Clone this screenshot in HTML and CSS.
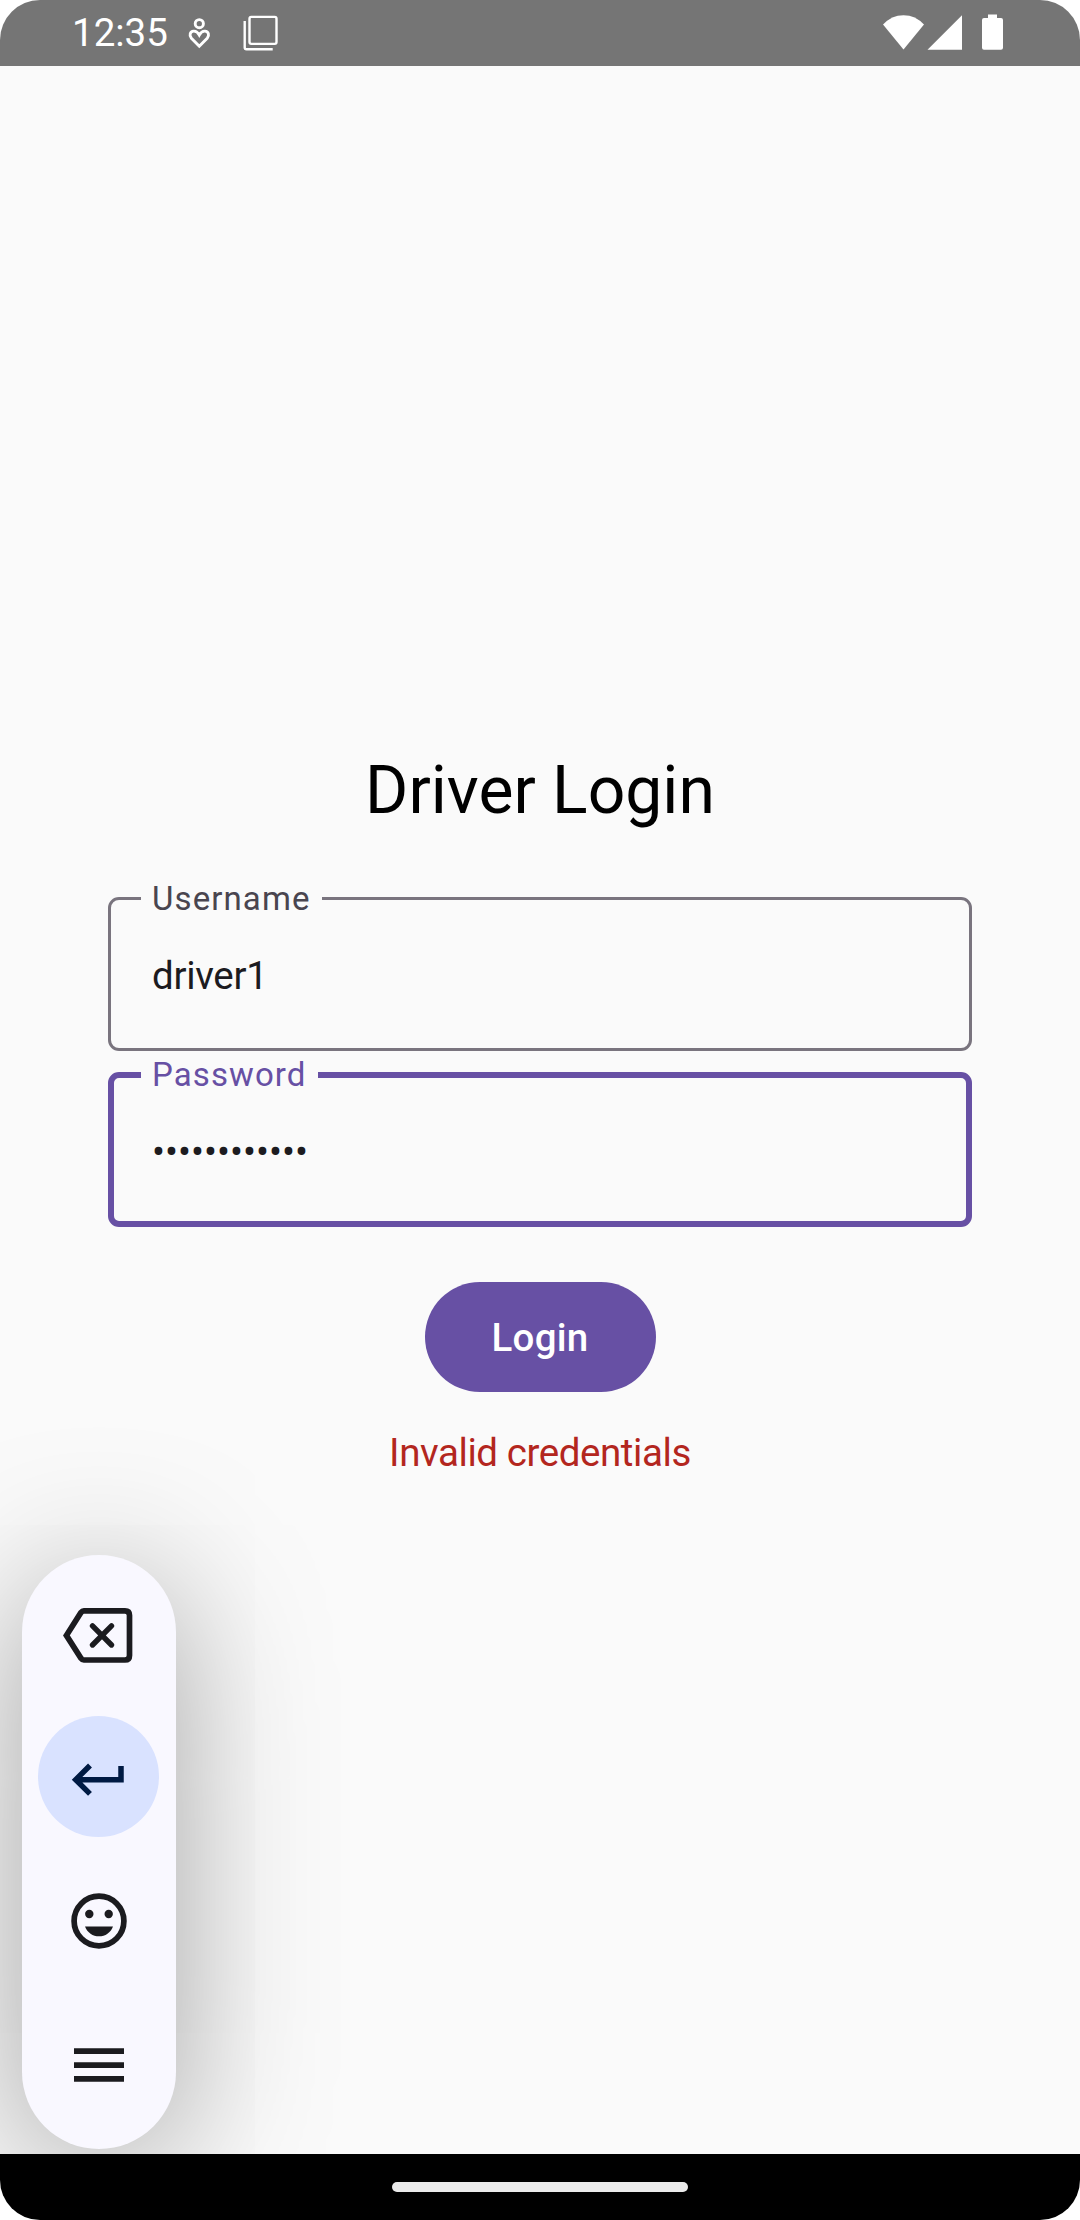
FILE: index.html
```html
<!DOCTYPE html>
<html lang="en">
<head>
<meta charset="utf-8">
<title>Driver Login</title>
<link rel="stylesheet" href="styles.css">
</head>
<body>
<div class="screen">
  <header class="status-bar">
    <span class="clock">12:35</span>
    <svg class="status-notifications" width="100" height="66" viewBox="180 0 100 66" fill="none" stroke="#fff" stroke-width="2.9">
      <circle cx="199.3" cy="23.7" r="4.1"/>
      <path d="M199.3 46.2 L191.4 38.2 C188.8 35.2 190.2 31.4 193.6 31.1 C196.3 30.9 198 32.6 199.3 35 C200.6 32.6 202.3 30.9 205 31.1 C208.4 31.4 209.8 35.2 207.2 38.2 Z"/>
      <rect x="249.5" y="16.9" width="27" height="27" rx="1.8" stroke-width="2.4"/>
      <path d="M244.7 21 V47.5 Q244.7 49.3 246.5 49.3 H272.7" stroke-width="2.4"/>
    </svg>
    <svg class="status-system" width="125" height="66" viewBox="880 0 125 66" fill="#fff">
      <path d="M903.5 49.5 L883 24.6 Q891.500 15.200 903.500 15.200 Q915.500 15.200 924 24.600 Z"/>
      <path d="M927.500 49.700 H962 V15.200 Z"/>
      <path d="M988 14.400 H997 V18 H1001 Q1003 18 1003 20 V47.700 Q1003 49.700 1001 49.700 H984 Q982 49.700 982 47.700 V20 Q982 18 984 18 H988 Z"/>
    </svg>
  </header>

  <main class="content">
    <h1 class="title">Driver Login</h1>
    <form class="login-form">
      <fieldset class="field">
        <legend class="field-label">Username</legend>
        <div class="field-value">driver1</div>
      </fieldset>
      <fieldset class="field field-focused">
        <legend class="field-label">Password</legend>
        <div class="field-value field-dots">••••••••••••</div>
      </fieldset>
      <button class="login-button" type="button">Login</button>
      <p class="error">Invalid credentials</p>
    </form>
    <div class="key-toolbar">
      <div class="key">
        <svg width="121" height="121" viewBox="0 0 121 121" fill="none" stroke="#1b1b1f" stroke-width="5.700">
          <path d="M45.800 37.800 H87 Q91.500 37.800 91.500 42.300 V82.500 Q91.500 87 87 87 H45.800 Q44.300 87 43 85.300 L28.400 62.400 L43 39.500 Q44.300 37.800 45.800 37.800 Z"/>
          <path d="M54.500 52.900 L73.500 72 M73.500 52.900 L54.500 72" stroke-width="5.400" stroke-linecap="round"/>
        </svg>
      </div>
      <div class="key key-enter">
        <svg width="121" height="121" viewBox="0 0 121 121" fill="none" stroke="#001a43" stroke-width="5.500">
          <path d="M83 50 V63.700 H38 M52 49.500 L37.700 63.700 L52 77.900"/>
        </svg>
      </div>
      <div class="key">
        <svg width="121" height="121" viewBox="0 0 121 121" fill="#1b1b1f">
          <circle cx="61" cy="62" r="24.900" fill="none" stroke="#1b1b1f" stroke-width="5.700"/>
          <circle cx="51.300" cy="55" r="4.200"/>
          <circle cx="70.700" cy="55" r="4.200"/>
          <path d="M47 67.400 H75 C72.600 73.600 67.300 77.300 61 77.300 S49.400 73.600 47 67.400 Z"/>
        </svg>
      </div>
      <div class="key">
        <svg width="121" height="121" viewBox="0 0 121 121" fill="#1b1b1f">
          <path d="M36 46.200 h50 v5.700 h-50 Z M36 60.200 h50 v5.700 h-50 Z M36 74.100 h50 v5.700 h-50 Z"/>
        </svg>
      </div>
    </div>
  </main>

  <footer class="nav-bar"><div class="home-handle"></div></footer>
</div>
</body>
</html>
```
FILE: styles.css
```css
* {
  box-sizing: border-box;
}

body {
  margin: 0;
  background: #fff;
  font-family: Roboto, "Liberation Sans", sans-serif;
}

.screen {
  display: flex;
  flex-direction: column;
  width: 1080px;
  height: 2220px;
  overflow: hidden;
  border-radius: 40px;
  background: #fafafa;
}

.status-bar {
  display: flex;
  flex: none;
  align-items: center;
  height: 66px;
  padding: 0 75px 0 72px;
  background: #757575;
  color: #fff;
}

.clock {
  width: 108px;
  font-size: 38.5px;
  line-height: 66px;
}

.status-system {
  margin-left: auto;
}

.content {
  position: relative;
  display: flex;
  flex: 1;
  flex-direction: column;
  align-items: center;
  overflow: hidden;
  padding: 0 108px;
}

.title {
  margin: 681px 0 0;
  font-size: 66px;
  font-weight: 400;
  line-height: 88px;
  color: #000;
}

.login-form {
  display: flex;
  flex-direction: column;
  align-items: center;
  width: 100%;
  margin-top: 43px;
}

.field {
  width: 100%;
  height: 173px;
  margin: 0 0 3px;
  padding: 0 41px;
  border: 3px solid #79747e;
  border-radius: 11px;
  color: #1c1b1f;
}

.field-label {
  height: 41px;
  margin-left: -11px;
  padding: 0 11px;
  font-size: 33px;
  line-height: 41px;
  letter-spacing: 1.1px;
  color: #49454f;
}

.field-value {
  padding-top: 32px;
  font-size: 38.5px;
  line-height: 50px;
  letter-spacing: -0.3px;
}

.field-dots {
  letter-spacing: 0;
}

.field-focused {
  padding: 0 38px;
  border: 6px solid #6750a4;
}

.field-focused .field-label {
  color: #6750a4;
}

.login-button {
  width: 231px;
  height: 110px;
  margin: 52px 0 0;
  padding: 2px 0 0;
  border: 0;
  border-radius: 55px;
  background: #6750a4;
  color: #fff;
  font: 500 38.5px/108px Roboto, "Liberation Sans", sans-serif;
  letter-spacing: 0.275px;
}

.error {
  margin: 35px 0 0;
  font-size: 38.5px;
  line-height: 52px;
  letter-spacing: -0.42px;
  color: #b3261e;
}

/* Floating toolbar, drawn over the page */
.key-toolbar {
  position: absolute;
  left: 22px;
  bottom: 5px;
  display: flex;
  flex-direction: column;
  gap: 22px;
  width: 154px;
  height: 594px;
  padding: 18px 0 0 16px;
  border-radius: 77px;
  background: #f9f8ff;
  box-shadow: 0 22px 150px rgba(0, 0, 0, 0.36);
}

.key {
  width: 121px;
  height: 121px;
  border-radius: 50%;
}

.key svg {
  display: block;
}

.key-enter {
  background: #d9e2ff;
}

.nav-bar {
  display: flex;
  flex: none;
  align-items: center;
  justify-content: center;
  height: 66px;
  background: #000;
}

.home-handle {
  width: 296px;
  height: 10px;
  border-radius: 5px;
  background: #ebebeb;
}
```
